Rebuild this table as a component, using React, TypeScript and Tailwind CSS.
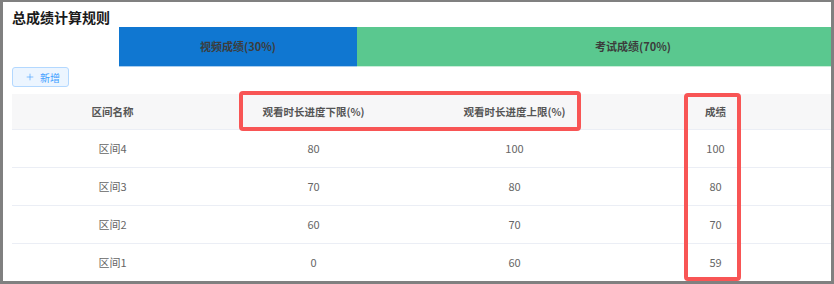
import { Plus } from "lucide-react";

const rows = [
    { name: "区间4", min: "80", max: "100", score: "100" },
    { name: "区间3", min: "70", max: "80", score: "80" },
    { name: "区间2", min: "60", max: "70", score: "70" },
    { name: "区间1", min: "0", max: "60", score: "59" },
];

const headers = ["区间名称", "观看时长进度下限(%)", "观看时长进度上限(%)", "成绩", ""];

export default function App() {
    return (
        <div
            className="relative w-[834px] h-[284px] overflow-hidden bg-white"
            style={{ fontFamily: '"Noto Sans CJK SC", "Noto Sans", sans-serif' }}
        >
            <div className="w-full h-full border-t-2 border-l-[3px] border-r-[3px] border-b-[3px] border-[#808080] overflow-hidden pl-[9px]">
                <h1 className="pt-[6px] h-[25px] leading-[19px] text-[14px] font-bold text-[#1a1a1a]">
                    总成绩计算规则
                </h1>

                <div className="flex ml-[107px] h-[40px] w-[790px]">
                    <div className="w-[238px] shrink-0 bg-[#1077d1] border-b border-[#a9cdee] flex items-center justify-center text-[11px] font-bold text-[#3c3c3c]">
                        视频成绩(30%)
                    </div>
                    <div className="w-[552px] shrink-0 bg-[#5ac88f] border-b border-[#c9eed9] flex items-center justify-center text-[11px] font-bold text-[#3c3c3c]">
                        考试成绩(70%)
                    </div>
                </div>

                <button className="flex items-center gap-[5px] h-[20px] w-[57px] pl-[12px] rounded-[3px] border border-[#b3d8ff] bg-[#ecf5ff] text-[10px] text-[#409eff]">
                    <Plus size={10} strokeWidth={1.5} />
                    新增
                </button>

                <div className="mt-[7px] w-[1005px]">
                    <div className="grid grid-cols-5 h-[36px] bg-[#f7f7f8] border-b border-[#ebeef5]">
                        {headers.map((h, i) => (
                            <div key={i} className="flex items-center justify-center text-[10.5px] font-bold text-[#555]">
                                {h}
                            </div>
                        ))}
                    </div>
                    {rows.map((r) => (
                        <div key={r.name} className="grid grid-cols-5 h-[38px] border-b border-[#ebeef5] text-[11px] text-[#666]">
                            <div className="flex items-center justify-center">{r.name}</div>
                            <div className="flex items-center justify-center">{r.min}</div>
                            <div className="flex items-center justify-center">{r.max}</div>
                            <div className="flex items-center justify-center">{r.score}</div>
                            <div />
                        </div>
                    ))}
                </div>
            </div>

            {/* annotation boxes */}
            <div className="absolute left-[239px] top-[91px] w-[342px] h-[40px] border-4 border-[#f85555] rounded-[4px]" />
            <div className="absolute left-[684px] top-[93px] w-[57px] h-[188px] border-4 border-[#f85555] rounded-[4px]" />
        </div>
    );
}
